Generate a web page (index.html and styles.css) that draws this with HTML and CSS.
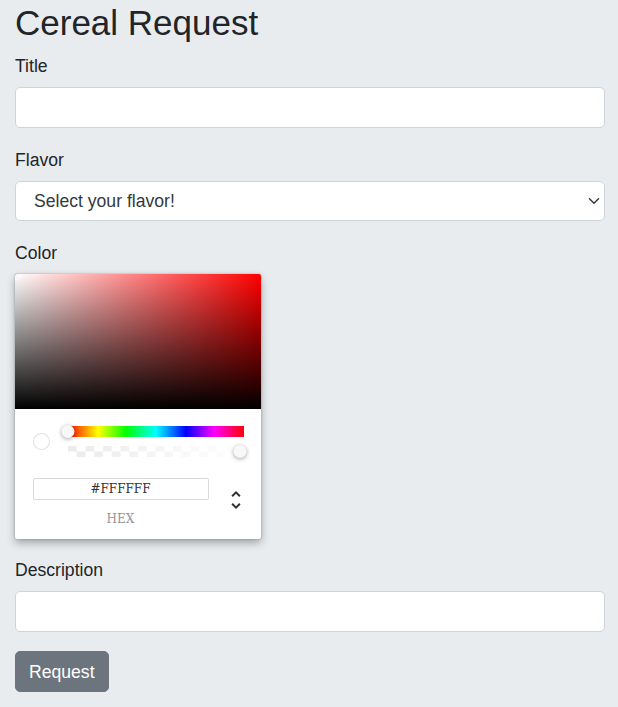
FILE: index.html
```html
<!DOCTYPE html>
<html lang="en">
<head>
<meta charset="utf-8">
<title>Cereal Request</title>
<link rel="stylesheet" href="styles.css">
</head>
<body>
<main class="page">
  <h1 class="title">Cereal Request</h1>
  <form class="form">
    <div class="group">
      <label class="label" for="title">Title</label>
      <input class="control" id="title" type="text">
    </div>
    <div class="group">
      <label class="label" for="flavor">Flavor</label>
      <div class="select-wrap">
        <select class="control select" id="flavor">
          <option>Select your flavor!</option>
        </select>
        <svg class="select-arrow" width="12" height="12" viewBox="0 0 16 16" aria-hidden="true"><path d="M2 5l6 6 6-6" fill="none" stroke="#343a40" stroke-width="2" stroke-linecap="round" stroke-linejoin="round"/></svg>
      </div>
    </div>
    <div class="group group-color">
      <label class="label">Color</label>
      <div class="chrome">
        <div class="sat">
          <div class="sat-white"></div>
          <div class="sat-black"></div>
          <div class="sat-pointer"></div>
        </div>
        <div class="chrome-body">
          <div class="controls">
            <div class="swatch-col"><div class="swatch"></div></div>
            <div class="sliders">
              <div class="hue"><div class="hue-pointer"></div></div>
              <div class="alpha">
                <div class="alpha-checker"></div>
                <div class="alpha-gradient"></div>
                <div class="alpha-track"><div class="alpha-pointer"></div></div>
              </div>
            </div>
          </div>
          <div class="fields">
            <div class="field">
              <input class="hex-input" type="text" value="#FFFFFF">
              <span class="hex-label">hex</span>
            </div>
            <div class="toggle">
              <svg class="toggle-icon" width="24" height="24" viewBox="0 0 24 24" aria-hidden="true"><path fill="#333" d="M12,18.17L8.83,15L7.42,16.41L12,21L16.59,16.41L15.17,15M12,5.83L15.17,9L16.59,7.59L12,3L7.41,7.59L8.83,9L12,5.83Z"/></svg>
            </div>
          </div>
        </div>
      </div>
    </div>
    <div class="group group-desc">
      <label class="label" for="desc">Description</label>
      <input class="control" id="desc" type="text">
    </div>
    <button class="btn" type="button">Request</button>
  </form>
</main>
</body>
</html>
```

FILE: styles.css
```css
* { box-sizing: border-box; }

html, body {
  margin: 0;
  padding: 0;
  background: #e9ecef;
}

body {
  font-family: "Liberation Sans", Arial, sans-serif;
  font-size: 17.6px;
  color: #212529;
}

.page {
  padding: 2px 13px 0 15px;
}

.title {
  margin: 0 0 9px;
  font-size: 35px;
  font-weight: 400;
  line-height: 42px;
  color: #212529;
}

.form {
  margin: 0;
}

.group {
  margin-bottom: 19px;
}

.group-color {
  margin-bottom: 18px;
}

.group-desc {
  margin-bottom: 19px;
}

.label {
  display: block;
  line-height: 26px;
  margin-bottom: 8px;
}

.control {
  display: block;
  width: 100%;
  height: 41px;
  margin: 0;
  padding: 0 13px;
  font-family: inherit;
  font-size: 17.6px;
  color: #212529;
  background: #fff;
  border: 1px solid #ced4da;
  border-radius: 5px;
  outline: none;
}

.select-wrap {
  position: relative;
}

.select {
  height: 40px;
  padding: 0 40px 0 18px;
  appearance: none;
  -webkit-appearance: none;
  color: #343a40;
}

.select-arrow {
  position: absolute;
  right: 5px;
  top: 50%;
  transform: translateY(-50%);
  pointer-events: none;
}

/* chrome colour picker */
.chrome {
  width: 246px;
  margin-top: 1px;
  background: #fff;
  border-radius: 2px;
  box-shadow: 0 0 2px rgba(0, 0, 0, 0.3), 0 4px 9px rgba(0, 0, 0, 0.3);
  font-family: "DejaVu Serif", serif;
}

.sat {
  position: relative;
  height: 135px;
  background: #f00;
  border-radius: 2px 2px 0 0;
  overflow: hidden;
}

.sat-white,
.sat-black {
  position: absolute;
  inset: 0;
}

.sat-white {
  background: linear-gradient(to right, #fff, rgba(255, 255, 255, 0));
}

.sat-black {
  background: linear-gradient(to top, #000, rgba(0, 0, 0, 0));
}

.sat-pointer {
  position: absolute;
  left: 0;
  top: 0;
  width: 13px;
  height: 13px;
  border-radius: 50%;
  box-shadow: inset 0 0 0 1px #fff;
  transform: translate(-6.5px, -6.5px);
}

.chrome-body {
  padding: 16.5px 17.5px 14.5px 17.5px;
}

.controls {
  display: flex;
}

.swatch-col {
  width: 35px;
  flex: none;
}

.swatch {
  margin-top: 7px;
  width: 17px;
  height: 17px;
  border-radius: 50%;
  background: #fff;
  box-shadow: inset 0 0 0 1px rgba(0, 0, 0, 0.12);
}

.sliders {
  flex: 1;
}

.hue {
  position: relative;
  height: 11px;
  margin-bottom: 9px;
  background: linear-gradient(to right, #f00 0%, #ff0 17%, #0f0 33%, #0ff 50%, #00f 67%, #f0f 83%, #f00 100%);
}

.hue-pointer,
.alpha-pointer {
  position: absolute;
  top: 0;
  width: 13px;
  height: 13px;
  border-radius: 50%;
  background: #f8f8f8;
  box-shadow: 0 1px 4px 0 rgba(0, 0, 0, 0.37);
}

.hue-pointer {
  left: 0;
  transform: translate(-6.5px, -1px);
}

.alpha {
  position: relative;
  height: 11px;
}

.alpha-checker,
.alpha-gradient {
  position: absolute;
  inset: 0;
}

.alpha-checker {
  background-image: conic-gradient(#fff 0 25%, #ebebeb 0 50%, #fff 0 75%, #ebebeb 0);
  background-size: 17.5px 17.5px;
  background-position: left center;
}

.alpha-gradient {
  background: linear-gradient(to right, rgba(255, 255, 255, 0), #fff);
}

.alpha-track {
  position: relative;
  height: 100%;
  margin: 0 3.3px;
}

.alpha-pointer {
  left: 100%;
  transform: translate(-6.5px, -1px);
}

.fields {
  display: flex;
  padding-top: 21px;
}

.field {
  flex: 1;
}

.hex-input {
  display: block;
  width: 100%;
  height: 22px;
  margin: 0;
  padding: 0;
  border: none;
  border-radius: 2px;
  box-shadow: inset 0 0 0 1px #dadada;
  font-family: "DejaVu Serif", serif;
  font-size: 12px;
  color: #333;
  text-align: center;
  background: #fff;
  outline: none;
}

.hex-label {
  display: block;
  margin-top: 13px;
  font-size: 12px;
  line-height: 12px;
  color: #969696;
  text-align: center;
  text-transform: uppercase;
}

.toggle {
  width: 35px;
  flex: none;
  display: flex;
  justify-content: flex-end;
  align-items: flex-start;
}

.toggle-icon {
  display: block;
  margin-top: 10.5px;
  margin-right: -4px;
}

.btn {
  display: inline-block;
  height: 41px;
  margin: 0;
  padding: 0 13px;
  font-family: inherit;
  font-size: 17.6px;
  line-height: 26px;
  color: #fff;
  background: #6c757d;
  border: 1px solid #6c757d;
  border-radius: 5px;
}
```
